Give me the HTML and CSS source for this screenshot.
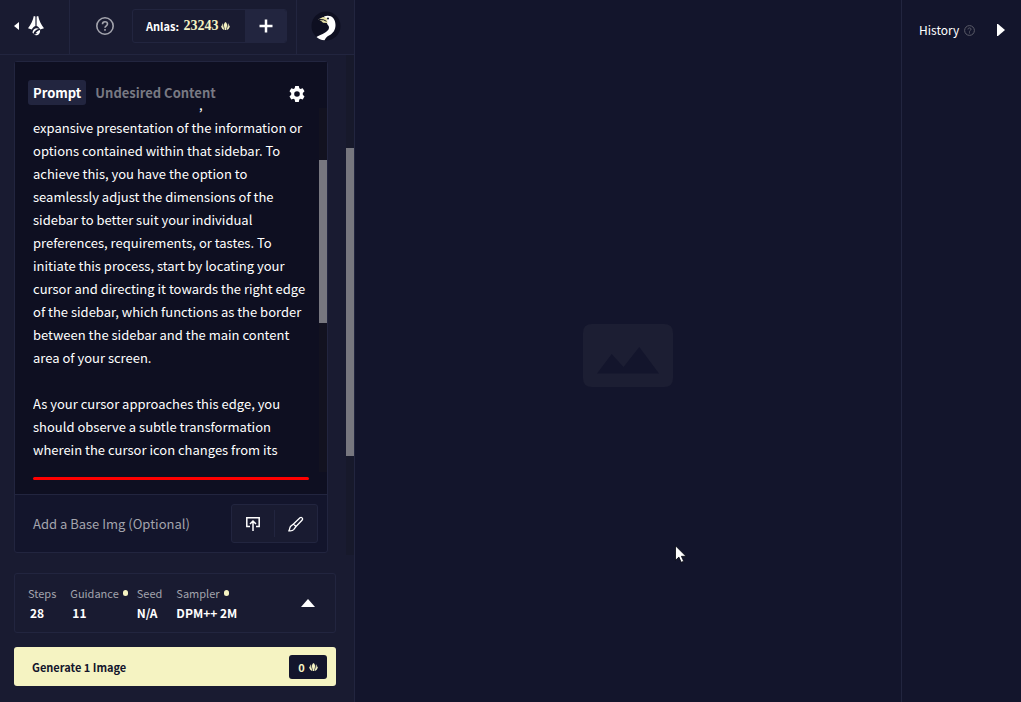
FILE: index.html
```html
<!DOCTYPE html>
<html lang="en">
<head>
<meta charset="utf-8">
<title>Image Generation</title>
<link rel="stylesheet" href="styles.css">
</head>
<body>
<svg class="defs" aria-hidden="true">
  <symbol id="anlas" viewBox="0 0 18 16">
    <path d="M9 0c2.500 2 3.500 4.500 3 8l-1.800 8H7.800L6 8C5.500 4.500 6.500 2 9 0Z"/>
    <path d="M4 2.500 4.800 9l2 7C3 15 .5 11.500 0 6.500L2.600 9C2 6.500 2.500 4 4 2.500Z"/>
    <path d="M14 2.500 13.200 9l-2 7c3.800-1 6.300-4.500 6.800-9.500L15.400 9c.6-2.500.1-5-1.400-6.500Z"/>
  </symbol>
</svg>
<div class="app">
  <aside class="sidebar">
    <header class="topbar">
      <a class="home" href="#" aria-label="Back to home">
        <svg width="5" height="8" viewBox="0 0 5 8"><path d="M5 0v8L0 4Z" fill="currentColor"/></svg>
        <svg width="16" height="20" viewBox="0 0 16 20"><g fill="currentColor"><path d="M5.800 0 7.400.6V10C5.600 10.600 4.500 12 3.800 13.500L0 12.200C2.800 8.800 5 4.500 5.800 0Z"/><path d="M10.200 0 8.600.6V10c1.800.6 2.900 2 3.600 3.500l3.800-1.300C13.200 8.800 11 4.500 10.200 0Z"/><path d="M11 12.800C8 11.200 4.500 13.200 4.500 16.800l1 1C5.800 15.500 8 13.600 11 12.800Z"/><path d="M12 14c.5 3-1.300 5.300-4.200 5.300l-2-.7c2-.2 3-.6 3.700-1.600-.7.4-1.300.4-2 .2 1-1.500 2.500-2.600 4.500-3.200Z"/></g></svg>
      </a>
      <div class="account">
        <button class="plain help" type="button" aria-label="Help">
          <svg width="18" height="18" viewBox="0 0 18 18" fill="none" stroke="currentColor" stroke-width="1.600"><circle cx="9" cy="9" r="8.200"/><path d="M6.500 7.200C6.500 5.700 7.600 4.800 9 4.800s2.500.9 2.500 2.200C11.500 8.800 9 8.800 9 10.800"/><path d="M9 12v1.800"/></svg>
        </button>
        <div class="balance">
          <span class="amount">Anlas: <b>23243</b><svg class="coin" width="9" height="8"><use href="#anlas"/></svg></span>
          <button class="add" type="button" aria-label="Buy Anlas"><svg width="14" height="14" viewBox="0 0 14 14"><path d="M7 .5v13M.5 7h13" stroke="currentColor" stroke-width="2.500"/></svg></button>
        </div>
      </div>
      <button class="plain avatar" type="button" aria-label="Account">
        <svg width="30" height="30" viewBox="0 0 30 30"><circle cx="15" cy="15" r="14.500" fill="#0e0f21"/><path d="M13 5.500C18.500 3 24.500 6 24.500 14c0 5-2.500 8.500-6.500 10.500-2 1-3 2-4.500 4.800-3.500-.2-6-1.500-8-3.300 3-1.800 9.500-4 12-7.500 1-2 .5-3.500-1-5Z" fill="#fff"/><path d="M7 8.500 12 6l4 1 .5 5-4.500-.2C10.500 10 9 9 7 8.500Z" fill="#e8e2a8"/><path d="m7.500 8.500 5 .3 3 1.500" fill="none" stroke="#0e0f21"/><circle cx="17" cy="7.500" r="1" fill="#0e0f21"/></svg>
      </button>
    </header>

    <main class="scroller">
      <section class="card">
        <div class="prompt">
          <div class="tabs">
            <button class="tab active" type="button">Prompt</button>
            <button class="tab" type="button">Undesired Content</button>
            <button class="plain gear" type="button" aria-label="Prompt settings">
              <svg width="16" height="16" viewBox="0 0 16 16"><path fill="currentColor" fill-rule="evenodd" d="M6.200 0h3.600l.5 2.200 1.200.7 2.200-.7 1.800 3.100-1.700 1.600v1.800l1.700 1.700-1.800 3.100-2.200-.7-1.200.7-.5 2.500H6.200l-.5-2.500-1.200-.7-2.200.7-1.800-3.100 1.700-1.700V6.900L.5 5.300l1.800-3.100 2.200.7 1.200-.7ZM8 5.200a2.800 2.800 0 1 0 0 5.600 2.800 2.800 0 0 0 0-5.600Z"/></svg>
            </button>
          </div>
          <div class="editor">
            <textarea class="text" aria-label="Prompt" spellcheck="false">&nbsp;&nbsp;&nbsp;&nbsp;&nbsp;&nbsp;&nbsp;&nbsp;&nbsp;&nbsp;&nbsp;&nbsp;&nbsp;&nbsp;&nbsp;&nbsp;&nbsp;&nbsp;&nbsp;&nbsp;&nbsp;&nbsp;&nbsp;&nbsp;&nbsp;&nbsp;&nbsp;&nbsp;&nbsp;&nbsp;&nbsp;&nbsp;&nbsp;&nbsp;&nbsp;&nbsp;&nbsp;&nbsp;&nbsp;&nbsp;&nbsp;&nbsp;&nbsp;&nbsp;&nbsp;&nbsp;&nbsp;&nbsp;&nbsp;&nbsp;&nbsp;&nbsp;&nbsp;&nbsp;&nbsp;&nbsp;&nbsp;,
expansive presentation of the information or
options contained within that sidebar. To
achieve this, you have the option to
seamlessly adjust the dimensions of the
sidebar to better suit your individual
preferences, requirements, or tastes. To
initiate this process, start by locating your
cursor and directing it towards the right edge
of the sidebar, which functions as the border
between the sidebar and the main content
area of your screen.

As your cursor approaches this edge, you
should observe a subtle transformation
wherein the cursor icon changes from its</textarea>
            <div class="track"><div class="thumb"></div></div>
          </div>
          <div class="limit"></div>
        </div>
        <div class="base">
          <span>Add a Base Img (Optional)</span>
          <div class="tools">
            <button class="plain" type="button" aria-label="Upload image"><svg width="14" height="14" viewBox="0 0 14 14" fill="none" stroke="currentColor" stroke-width="1.500"><path d="M4 9.500H.8V.8h12.400v8.700H10M7 14V4.500M4 7l3-3 3 3"/></svg></button>
            <button class="plain" type="button" aria-label="Paint image"><svg width="16" height="16" viewBox="0 0 16 16" fill="none" stroke="currentColor" stroke-width="1.300"><path d="M5.500 8 12 1.800c1.400-1.200 3.300.6 2.200 2.200L8 10.500ZM5.500 8 2.700 10.200C1.500 11.500 2 13 .9 14.800c2 .3 4-.1 5-1.400L8 10.500"/></svg></button>
          </div>
        </div>
      </section>
      <div class="track page-track"><div class="thumb"></div></div>
    </main>

    <footer class="bottom">
      <button class="summary" type="button" aria-label="Show settings">
        <span class="stat steps"><span>Steps</span><b>28</b></span>
        <span class="stat guidance"><span class="changed">Guidance</span><b>11</b></span>
        <span class="stat"><span>Seed</span><b>N/A</b></span>
        <span class="stat"><span class="changed">Sampler</span><b>DPM++ 2M</b></span>
        <svg class="chevron" width="14" height="8" viewBox="0 0 14 8"><path d="M7 0l7 8H0Z" fill="currentColor"/></svg>
      </button>
      <button class="generate" type="button">
        <span>Generate 1 Image</span>
        <span class="cost">0<svg class="coin" width="9" height="8"><use href="#anlas"/></svg></span>
      </button>
    </footer>
  </aside>

  <section class="canvas" aria-label="Image preview">
    <svg width="90" height="63" viewBox="0 0 90 63"><path fill="#1c1e33" fill-rule="evenodd" d="M9 0h72q9 0 9 9v45q0 9-9 9H9q-9 0-9-9V9Q0 0 9 0ZM14 49.500h62L56.300 23 40.500 43 28.700 30Z"/></svg>
  </section>

  <aside class="history">
    <h2>History</h2>
    <svg class="hint" width="11" height="11" viewBox="0 0 18 18" fill="none" stroke="currentColor" stroke-width="1.600"><circle cx="9" cy="9" r="8"/><path d="M6.500 7.200C6.500 5.700 7.600 4.800 9 4.800s2.500.9 2.500 2.200C11.500 8.800 9 8.800 9 10.800M9 12v1.800"/></svg>
    <button class="plain collapse" type="button" aria-label="Collapse history"><svg width="8" height="12" viewBox="0 0 8 12"><path d="M0 0h1l7 6-7 6H0Z" fill="currentColor"/></svg></button>
  </aside>
</div>
<svg class="pointer" width="12" height="18" viewBox="0 0 12 18" aria-hidden="true"><path d="M.5.800v14.500l3.400-3.200 2.300 5.200 2.500-1-2.300-5h4.600Z" fill="#fff" stroke="#05060f" stroke-width=".8"/></svg>
</body>
</html>
```
FILE: styles.css
```css
:root {
  --bg0: #0e0f21;
  --bg1: #13152c;
  --bg2: #191b31;
  --bg3: #22253f;
  --cream: #f5f3c2;
  --muted: #a3a4ad;
}

* { box-sizing: border-box; }

body {
  margin: 0;
  background: var(--bg1);
  color: #fff;
  font: 13px/20px "Noto Sans CJK SC", "Noto Sans", sans-serif;
}

button {
  border: 0;
  padding: 0;
  background: none;
  color: inherit;
  font: inherit;
}

svg { display: block; flex: none; }
.defs { position: absolute; width: 0; height: 0; }
.plain { display: flex; align-items: center; justify-content: center; }

.app {
  display: grid;
  grid-template-columns: 355px 1fr 120px;
  height: 100vh;
}

.sidebar {
  display: flex;
  flex-direction: column;
  min-height: 0;
  background: var(--bg2);
  border-right: 1px solid var(--bg3);
}

/* Top bar */
.topbar {
  display: flex;
  height: 55px;
  border-bottom: 1px solid var(--bg3);
}
.home {
  display: flex;
  align-items: center;
  gap: 9px;
  width: 70px;
  padding: 0 0 3px 14px;
  border-right: 1px solid var(--bg3);
  color: #fff;
}
.account {
  display: flex;
  flex: 1;
  align-items: center;
  justify-content: flex-end;
  gap: 18px;
  padding: 0 9px 2px 0;
  border-right: 1px solid var(--bg3);
}
.help { color: var(--muted); }
.balance {
  display: flex;
  height: 34px;
  border: 1px solid var(--bg3);
  border-radius: 3px;
  overflow: hidden;
}
.amount {
  display: flex;
  align-items: center;
  width: 112px;
  padding-left: 13px;
  font-size: 11px;
  font-weight: 700;
  white-space: pre;
}
.amount b {
  margin-left: 2px;
  color: var(--cream);
  font-family: "Liberation Serif", serif;
  font-size: 14px;
}
.coin { margin-left: 2px; fill: var(--cream); }
.add {
  display: flex;
  align-items: center;
  justify-content: center;
  width: 41px;
  background: var(--bg3);
}
.avatar { width: 57px; padding-bottom: 3px; }

/* Prompt card */
.scroller {
  display: flex;
  flex: 1;
  justify-content: space-between;
  min-height: 0;
  padding-left: 14px;
}
.card {
  display: flex;
  flex-direction: column;
  width: 314px;
  margin: 6px 0 2px;
  border: 1px solid var(--bg3);
  border-radius: 3px;
  background: var(--bg1);
}
.prompt {
  display: flex;
  flex: 1;
  flex-direction: column;
  min-height: 0;
  background: var(--bg0);
}
.tabs {
  display: flex;
  align-items: center;
  gap: 4px;
  padding: 18px 22px 0 13px;
}
.tab {
  height: 25px;
  padding: 0 5px;
  border-radius: 3px;
  color: #787983;
  font-size: 13px;
  font-weight: 700;
}
.tab.active { background: var(--bg3); color: #fff; }
.gear { margin-left: auto; padding-top: 3px; }

.editor {
  display: flex;
  flex: 1;
  align-items: flex-end;
  min-height: 0;
  margin-top: 3px;
  padding-left: 18px;
  overflow: hidden;
}
.text {
  flex: 1;
  min-width: 0;
  height: 379px;
  margin: 0;
  padding: 0;
  border: 0;
  outline: 0;
  resize: none;
  overflow: hidden;
  background: none;
  color: #fff;
  font: inherit;
  line-height: 23px;
}
.track { align-self: stretch; width: 8px; background: #121220; }
.thumb { background: #77777f; }
.editor .thumb { height: 163px; margin-top: 52px; }
.page-track { background: #17192b; }
.page-track .thumb { height: 308px; margin-top: 93px; }
.limit {
  height: 3px;
  margin: 5px 18px 14px;
  border-radius: 2px;
  background: #f00;
}

.base {
  display: flex;
  align-items: center;
  justify-content: space-between;
  height: 58px;
  padding: 0 9px 0 18px;
  border-top: 1px solid var(--bg3);
  color: var(--muted);
}
.tools {
  display: flex;
  width: 87px;
  height: 39px;
  padding: 5px 0;
  border: 1px solid var(--bg3);
  border-radius: 3px;
  background: var(--bg2);
  color: #fff;
}
.tools button { flex: 1; }
.tools button + button { border-left: 1px solid var(--bg3); }

/* Settings summary and generate */
.bottom {
  display: flex;
  flex-direction: column;
  gap: 14px;
  padding: 18px 18px 16px 14px;
}
.summary {
  display: flex;
  align-items: center;
  height: 60px;
  padding: 0 20px 0 13px;
  border: 1px solid var(--bg3);
  border-radius: 3px;
  text-align: left;
}
.stat { display: flex; flex-direction: column; margin-right: 14px; }
.stat span { color: var(--muted); font-size: 11px; }
.stat b { font-size: 12px; }
.steps b, .guidance b { padding-left: 2px; }
.guidance { margin-right: 9px; }
.changed::after {
  content: "";
  display: inline-block;
  width: 5px;
  height: 6px;
  margin-left: 4px;
  border-radius: 3px;
  background: var(--cream);
  vertical-align: 2px;
}
.chevron { margin-left: auto; }
.generate {
  display: flex;
  align-items: center;
  justify-content: space-between;
  height: 39px;
  padding: 0 9px 0 18px;
  border-radius: 3px;
  background: var(--cream);
  color: var(--bg1);
  font-size: 11px;
  font-weight: 700;
}
.cost {
  display: flex;
  align-items: center;
  justify-content: center;
  gap: 2px;
  width: 38px;
  height: 24px;
  border-radius: 3px;
  background: var(--bg1);
  color: var(--cream);
}

/* Canvas and history */
.canvas {
  display: flex;
  align-items: center;
  justify-content: center;
  padding-top: 8px;
}
.history {
  display: flex;
  align-items: flex-start;
  padding: 20px 16px 0 17px;
  border-left: 1px solid var(--bg3);
}
.history h2 {
  margin: 0;
  font-size: 12px;
  font-weight: 400;
}
.hint { margin: 5px 0 0 5px; color: #5d5e6b; }
.collapse { height: 20px; margin-left: auto; }

.pointer { position: absolute; left: 675px; top: 545px; }
```
